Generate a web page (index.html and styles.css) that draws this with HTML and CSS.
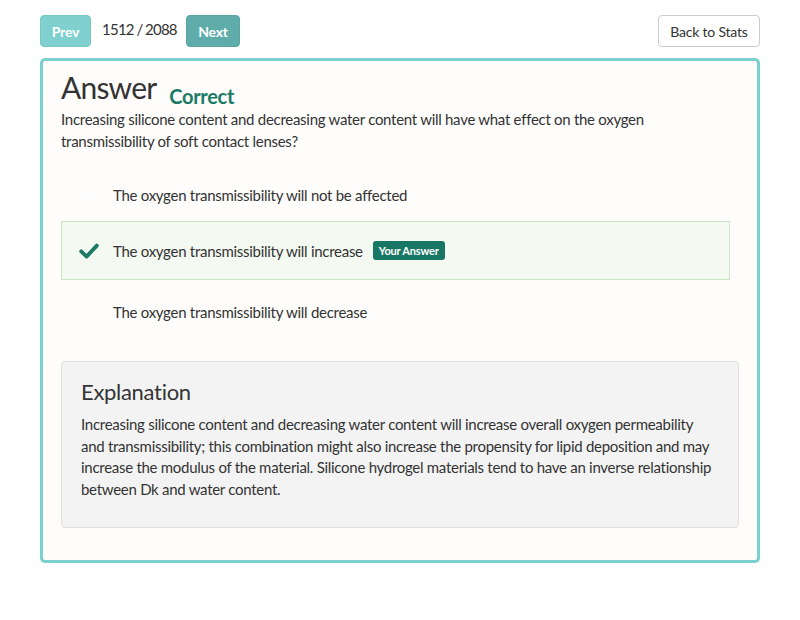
FILE: index.html
```html
<!DOCTYPE html>
<html>
<head>
<meta charset="utf-8">
<link rel="stylesheet" href="styles.css">
</head>
<body>
<div class="topbar">
  <div class="nav">
    <button class="btn btn-prev">Prev</button>
    <span class="counter">1512 / 2088</span>
    <button class="btn btn-next">Next</button>
  </div>
  <button class="btn btn-back">Back to Stats</button>
</div>
<div class="card">
  <div class="title-row">
    <h1 class="title">Answer</h1>
    <span class="status">Correct</span>
  </div>
  <p class="question">Increasing silicone content and decreasing water content will have what effect on the oxygen transmissibility of soft contact lenses?</p>
  <ul class="options">
    <li class="option">
      <span class="icon"><svg viewBox="0 0 20 16" width="20" height="16"><path d="M2 8.5 L7.5 14 L18 3" fill="none" stroke="#ffffff" stroke-width="3.6" stroke-linecap="round" stroke-linejoin="round"/></svg></span>
      <span class="opt-text">The oxygen transmissibility will not be affected</span>
    </li>
    <li class="option option-selected">
      <span class="icon"><svg viewBox="0 0 20 16" width="20" height="16"><path d="M2.2 8.3 L7.6 13.6 L17.8 2.6" fill="none" stroke="#1a7a66" stroke-width="3.8" stroke-linecap="round" stroke-linejoin="round"/></svg></span>
      <span class="opt-text">The oxygen transmissibility will increase</span>
      <span class="badge">Your Answer</span>
    </li>
    <li class="option">
      <span class="icon"></span>
      <span class="opt-text">The oxygen transmissibility will decrease</span>
    </li>
  </ul>
  <div class="explanation">
    <h2 class="exp-title">Explanation</h2>
    <p class="exp-text">Increasing silicone content and decreasing water content will increase overall oxygen permeability and transmissibility; this combination might also increase the propensity for lipid deposition and may increase the modulus of the material. Silicone hydrogel materials tend to have an inverse relationship between Dk and water content.</p>
  </div>
</div>
</body>
</html>
```
FILE: styles.css
```css
* { box-sizing: border-box; }
body {
  margin: 0;
  padding: 15px 40px 0 40px;
  background: #ffffff;
  font-family: "Lato", "Open Sans", sans-serif;
  color: #333333;
  font-size: 15px;
  letter-spacing: -0.28px;
}
.topbar {
  display: flex;
  justify-content: space-between;
  align-items: center;
  height: 32px;
}
.nav {
  display: flex;
  align-items: center;
}
.btn {
  height: 32px;
  border-radius: 4px;
  font-family: inherit;
  font-size: 14px;
  letter-spacing: -0.2px;
  border: 1px solid transparent;
  padding: 0;
}
.btn-prev {
  width: 51px;
  background: #80d0cf;
  border-color: #77c7c6;
  color: #ffffff;
  font-weight: bold;
}
.btn-next {
  width: 54px;
  background: #5eadaa;
  border-color: #58a5a2;
  color: #ffffff;
  font-weight: bold;
}
.counter {
  width: 95px;
  padding-left: 11px;
  font-size: 15px;
  letter-spacing: -0.75px;
  word-spacing: -0.5px;
  white-space: nowrap;
  color: #333;
  position: relative;
  top: -2px;
}
.btn-back {
  width: 102px;
  background: #ffffff;
  border-color: #cccccc;
  color: #333333;
}
.card {
  margin-top: 11px;
  border: 3px solid #7ccfcd;
  border-radius: 5px;
  background: #fefdfb;
  padding: 6px 18px 32px 18px;
}
.title-row {
  display: flex;
  align-items: baseline;
}
.title {
  margin: 0;
  font-size: 30px;
  letter-spacing: -0.8px;
  font-weight: normal;
  line-height: 40px;
  color: #333;
}
.status {
  margin-left: 13px;
  font-size: 20px;
  letter-spacing: -0.3px;
  font-weight: bold;
  color: #1a7a66;
  position: relative;
  top: 5px;
}
.question {
  margin: 1px 0 17px 0;
  line-height: 22px;
}
.options {
  list-style: none;
  margin: 0 9px 0 0;
  padding: 0;
}
.option {
  display: flex;
  align-items: center;
  height: 52px;
  padding-left: 17px;
  border: 1px solid transparent;
}
.option-selected {
  height: 59px;
  background: #f4f9f1;
  border-color: #cde3c6;
}
.option-selected + .option {
  margin-top: 6px;
}
.icon {
  width: 20px;
  height: 16px;
  margin-right: 14px;
  display: flex;
}
.opt-text {
  font-size: 15px;
}
.badge {
  margin-left: 10px;
  background: #177764;
  color: #ffffff;
  font-size: 11px;
  letter-spacing: -0.2px;
  font-weight: bold;
  padding: 2px 6px;
  border-radius: 3px;
  line-height: 15px;
}
.explanation {
  margin-top: 23px;
  background: #f3f3f3;
  border: 1px solid #e0e0e0;
  border-radius: 4px;
  padding: 14px 20px 26px 19px;
}
.exp-title {
  margin: 0 0 6px 0;
  font-size: 22px;
  letter-spacing: -0.3px;
  font-weight: normal;
  line-height: 32px;
  color: #333;
}
.exp-text {
  margin: 0;
  line-height: 21.7px;
  font-size: 15px;
}
```
